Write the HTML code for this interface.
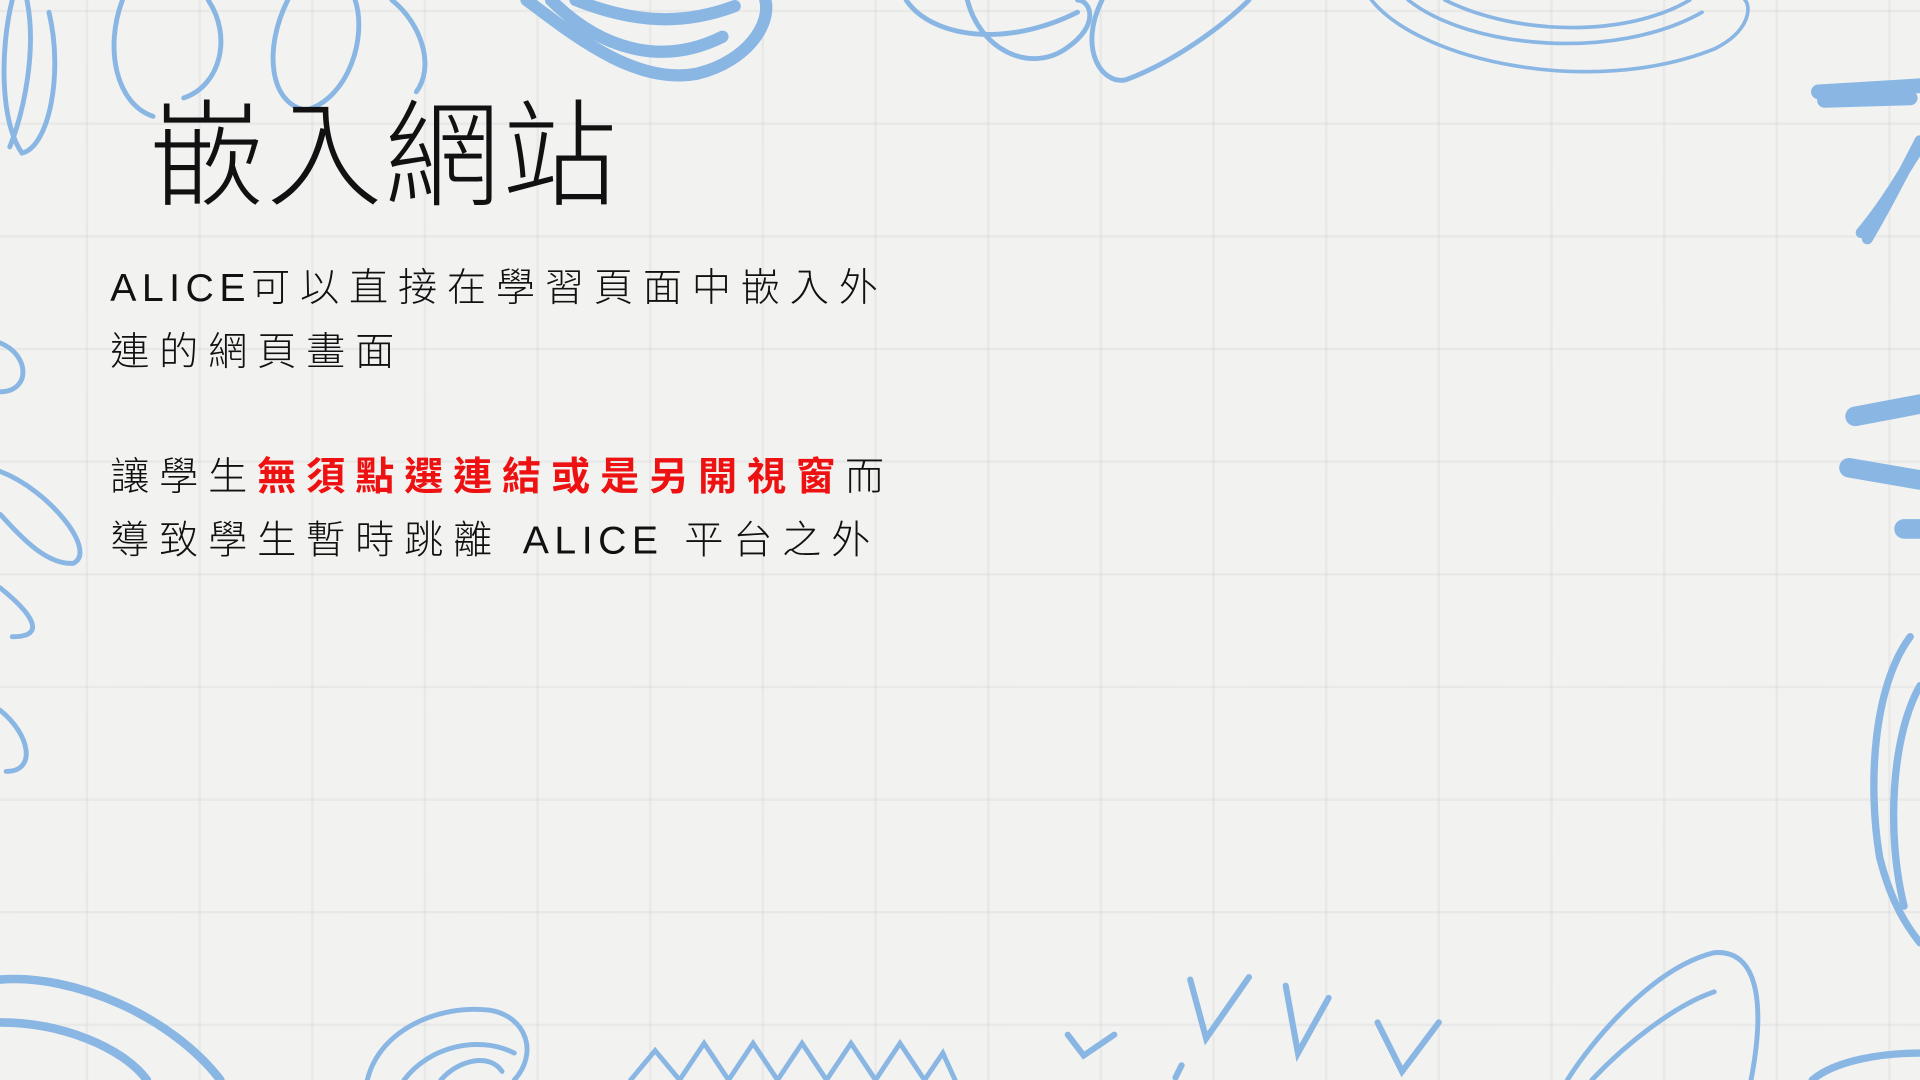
<!DOCTYPE html>
<html><head><meta charset="utf-8"><style>
html,body{margin:0;padding:0;width:1920px;height:1080px;overflow:hidden;background:#f1f1f0}
#s{position:absolute;left:0;top:0;width:1568px;height:882px;transform:scale(1.22449);transform-origin:0 0;
background-color:#f2f2f1;
background-image:linear-gradient(to right, rgba(190,190,190,.18) 2px, transparent 2px),linear-gradient(to bottom, rgba(190,190,190,.18) 2px, transparent 2px);
background-size:92px 92px;background-position:70px 100px;font-family:"Liberation Sans","Noto Sans CJK TC",sans-serif;color:#111}
svg{position:absolute;left:0;top:0}
.t{position:absolute;left:122px;top:52px;font-size:94px;letter-spacing:2px;font-family:"Noto Sans CJK TC",sans-serif;font-weight:300}
.b{position:absolute;left:90px;font-size:32px;letter-spacing:8px;font-family:"Liberation Sans","Noto Sans CJK TC",sans-serif;font-weight:300;white-space:nowrap;line-height:52px}
.b .l{letter-spacing:4.5px}
.r{color:#ee1111;font-weight:700}
</style></head><body><div id="s">
<svg width="1568" height="882" viewBox="0 0 1568 882" fill="none" stroke="#8ab6e4" stroke-width="4" stroke-linecap="round">
<path d="M10 0 C0 40 0 100 18 125 C40 120 52 60 40 10 M22 0 C30 40 20 90 8 120"/>
<path d="M100 0 C85 40 95 85 125 95 M170 0 C190 30 180 70 150 80"/>
<path d="M235 0 C215 40 220 85 250 90 C285 80 300 30 290 0 M320 0 C345 20 355 55 340 75"/>
<path d="M430 0 C470 30 520 70 570 60 C610 50 630 20 625 0 M450 0 C490 40 540 55 590 30 M470 0 C520 20 560 20 600 5" stroke-width="10"/>
<path d="M740 0 C760 30 820 40 880 10 M790 0 C800 40 840 60 870 40 C900 20 890 0 880 0 M900 0 C880 40 900 70 920 65 C960 50 1000 20 1020 0"/>
<path d="M1120 0 C1160 50 1300 80 1400 40 C1430 25 1430 5 1425 0 M1150 0 C1200 40 1320 50 1390 10 M1180 0 C1240 30 1330 30 1380 0" stroke-width="3"/>
<path d="M1485 75 L1568 70 M1490 82 L1560 80" stroke-width="12"/>
<path d="M1525 195 C1540 170 1555 140 1568 115 M1520 190 C1545 160 1560 130 1568 120" stroke-width="9"/>
<path d="M1515 340 L1568 330 M1510 382 L1568 392 M1555 432 L1568 432" stroke-width="16"/>
<path d="M1560 520 C1530 560 1525 640 1535 700 C1545 740 1560 760 1568 770 M1568 560 C1545 600 1540 680 1555 740" stroke-width="6"/>
<path d="M0 280 C25 290 25 320 0 320 M0 385 C40 400 80 450 60 460 C35 462 10 430 0 420 M0 480 C25 500 40 520 10 520 M0 580 C25 600 30 630 5 630"/>
<path d="M0 800 C60 795 140 830 180 882 M0 835 C50 835 100 855 120 882" stroke-width="7"/>
<path d="M300 882 C310 840 360 820 400 825 C430 830 440 860 420 882 M330 882 C350 855 390 845 420 860 M360 882 C375 865 400 860 410 875"/>
<path d="M515 882 L535 858 L555 882 L575 852 L595 882 L615 852 L635 882 L655 852 L675 882 L695 852 L715 882 L735 852 L755 882 L770 860 L780 882"/>
<path d="M872 845 L885 862 L910 845 M972 800 L985 848 L1020 798 M1050 805 L1060 860 L1085 815 M1125 835 L1145 875 L1175 835 M960 880 L965 870" stroke-width="5"/>
<path d="M1280 882 C1300 850 1350 790 1400 778 C1440 775 1440 830 1430 882 M1300 882 C1330 850 1370 820 1400 810"/>
<path d="M1480 882 C1500 865 1540 860 1568 860" stroke-width="6"/>
</svg>
<div class="t">嵌入網站</div>
<div class="b" style="top:209px"><span class="l">ALICE</span>可以直接在學習頁面中嵌入外</div>
<div class="b" style="top:261px">連的網頁畫面</div>
<div class="b" style="top:363px">讓學生<span class="r">無須點選連結或是另開視窗</span>而</div>
<div class="b" style="top:415px">導致學生暫時跳離 <span class="l">ALICE</span> 平台之外</div>
</div></body></html>
